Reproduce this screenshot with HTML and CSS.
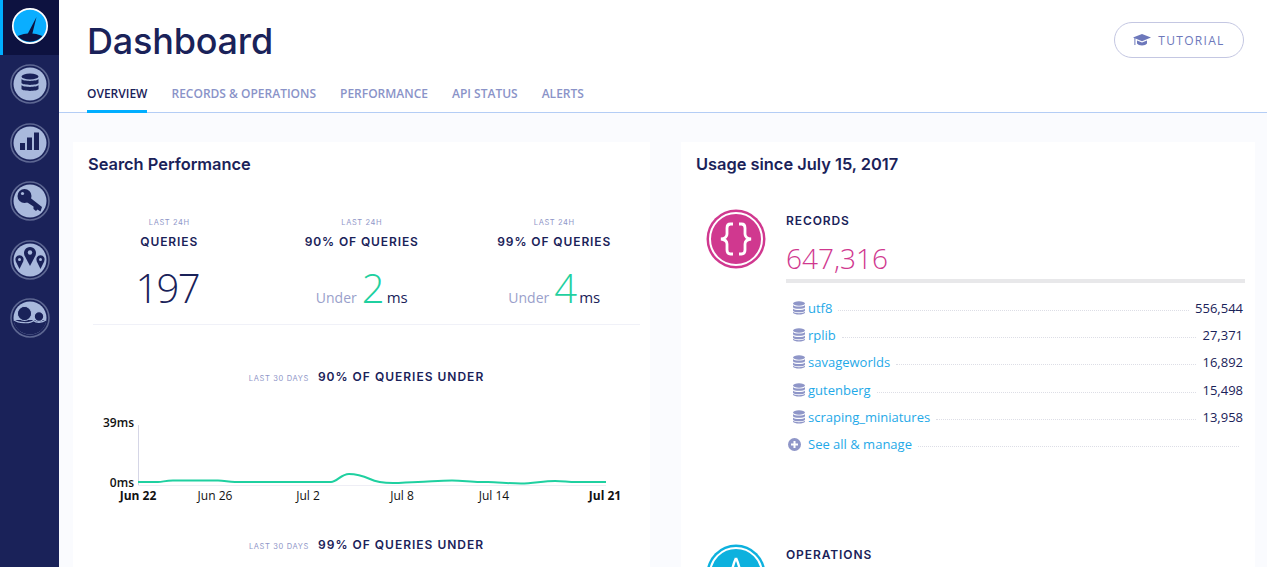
FILE: index.html
```html
<!DOCTYPE html>
<html lang="en">
<head>
    <meta charset="UTF-8">
    <meta name="viewport" content="width=device-width, initial-scale=1.0">
    <title>Dashboard</title>
    <link rel="stylesheet" href="styles.css">
</head>
<body>
    <nav class="sidebar">
        <a class="side-item active">
            <svg viewBox="0 0 40 40" width="40" height="40">
                <circle cx="20" cy="20" r="17" fill="#0aaeff"/>
                <path d="M7.5 30 Q20 24.5 32.5 30 A16.6 16.6 0 0 1 7.5 30 Z" fill="#0d1240"/>
                <circle cx="20" cy="20" r="17.2" fill="none" stroke="#fff" stroke-width="1.7"/>
                <path d="M17.6 28 L26.5 11 L22 29 Q19.5 30 17.6 28 Z" fill="#0d1240"/>
            </svg>
        </a>
        <a class="side-item">
            <svg viewBox="0 0 40 40" width="40" height="40">
                <circle cx="20" cy="20" r="19" fill="none" stroke="#5d6792" stroke-width="1.6"/>
                <circle cx="20" cy="20" r="16.5" fill="#a9b9dc"/>
                <ellipse cx="20" cy="12.5" rx="8.5" ry="3" fill="#1a2259"/>
                <path d="M11.5 15 C13 17.5 27 17.5 28.5 15 V19 C27 21.5 13 21.5 11.5 19 Z" fill="#1a2259"/>
                <path d="M11.5 21 C13 23.5 27 23.5 28.5 21 V25 C27 27.5 13 27.5 11.5 25 Z" fill="#1a2259"/>
            </svg>
        </a>
        <a class="side-item">
            <svg viewBox="0 0 40 40" width="40" height="40">
                <circle cx="20" cy="20" r="19" fill="none" stroke="#5d6792" stroke-width="1.6"/>
                <circle cx="20" cy="20" r="16.5" fill="#a9b9dc"/>
                <rect x="10" y="20" width="5" height="7" fill="#1a2259"/>
                <rect x="17" y="14.5" width="5" height="12.5" fill="#1a2259"/>
                <rect x="24" y="9.5" width="5" height="17.5" fill="#1a2259"/>
            </svg>
        </a>
        <a class="side-item">
            <svg viewBox="0 0 40 40" width="40" height="40">
                <circle cx="20" cy="20" r="19" fill="none" stroke="#5d6792" stroke-width="1.6"/>
                <circle cx="20" cy="20" r="16.5" fill="#a9b9dc"/>
                <circle cx="14.5" cy="15" r="7" fill="#1a2259"/>
                <circle cx="12.5" cy="12.5" r="1.6" fill="#a9b9dc"/>
                <path d="M18 15 L32 26 L30.5 30.5 L27.5 28.5 L26 30 L23.5 28 L23.5 25.5 L15 20 Z" fill="#1a2259"/>
            </svg>
        </a>
        <a class="side-item">
            <svg viewBox="0 0 40 40" width="40" height="40">
                <circle cx="20" cy="20" r="19" fill="none" stroke="#5d6792" stroke-width="1.6"/>
                <circle cx="20" cy="20" r="16.5" fill="#a9b9dc"/>
                <path d="M20 26 L14.5 15.5 A6 6 0 1 1 25.5 15.5 Z" fill="#1a2259"/>
                <circle cx="20" cy="12.5" r="2.2" fill="#a9b9dc"/>
                <path d="M9.5 29 L5.8 21.5 A4.2 4.2 0 1 1 13.2 21.5 Z" fill="#1a2259"/>
                <circle cx="9.5" cy="19.5" r="1.5" fill="#a9b9dc"/>
                <path d="M30.5 29 L26.8 21.5 A4.2 4.2 0 1 1 34.2 21.5 Z" fill="#1a2259"/>
                <circle cx="30.5" cy="19.5" r="1.5" fill="#a9b9dc"/>
            </svg>
        </a>
        <a class="side-item">
            <svg viewBox="0 0 40 40" width="40" height="40">
                <circle cx="20" cy="20" r="19" fill="none" stroke="#5d6792" stroke-width="1.6"/>
                <circle cx="20" cy="20" r="16.5" fill="#a9b9dc"/>
                <path d="M3.6 22 H36.4 C35.5 31 28 36.5 20 36.5 C12 36.5 4.5 31 3.6 22 Z" fill="#1a2259"/>
                <circle cx="14.5" cy="15.5" r="7" fill="#1a2259" stroke="#a9b9dc" stroke-width="1.2"/>
                <circle cx="29" cy="18.5" r="4.8" fill="#1a2259" stroke="#a9b9dc" stroke-width="1.2"/>
                <path d="M4 22 C8 25 20 26 23.5 22.5 C26 25 32 25 36 22" fill="none" stroke="#a9b9dc" stroke-width="1.2"/>
                <circle cx="14.5" cy="15.5" r="6.4" fill="#1a2259"/>
            </svg>
        </a>
    </nav>

    <div class="main">
        <header class="page-header">
            <div class="title-row">
                <h1>Dashboard</h1>
                <a class="tutorial-btn">
                    <svg viewBox="0 0 18 14" width="18" height="14">
                        <path d="M9 1 L18 4.6 L9 8.2 L0 4.6 Z" fill="#6d78bb"/>
                        <path d="M4 7.4 L9 9.4 L14 7.4 V10.6 C12.5 13.2 5.5 13.2 4 10.6 Z" fill="#6d78bb"/>
                        <rect x="1.4" y="5" width="1" height="7" fill="#6d78bb"/>
                    </svg>
                    TUTORIAL
                </a>
            </div>
            <div class="tabs">
                <a class="tab active">OVERVIEW</a>
                <a class="tab">RECORDS &amp; OPERATIONS</a>
                <a class="tab">PERFORMANCE</a>
                <a class="tab">API STATUS</a>
                <a class="tab">ALERTS</a>
            </div>
        </header>

        <div class="content">
            <section class="card">
                <h2>Search Performance</h2>
                <div class="stats">
                    <div class="stat">
                        <div class="stat-period">LAST 24H</div>
                        <div class="stat-title">QUERIES</div>
                        <div class="stat-value"><span class="big-dark">197</span></div>
                    </div>
                    <div class="stat">
                        <div class="stat-period">LAST 24H</div>
                        <div class="stat-title">90% OF QUERIES</div>
                        <div class="stat-value"><span class="under">Under</span><span class="big-green">2</span><span class="unit">ms</span></div>
                    </div>
                    <div class="stat">
                        <div class="stat-period">LAST 24H</div>
                        <div class="stat-title">99% OF QUERIES</div>
                        <div class="stat-value"><span class="under">Under</span><span class="big-green">4</span><span class="unit">ms</span></div>
                    </div>
                </div>
                <div class="stats-rule"></div>

                <div class="chart-head"><span class="chart-period">LAST 30 DAYS</span><span class="chart-title">90% OF QUERIES UNDER</span></div>
                <svg class="chart" viewBox="0 0 577 86" width="577" height="86">
                    <line x1="65.5" y1="10" x2="65.5" y2="70" stroke="#d5d6e6"/>
                    <line x1="65" y1="70.5" x2="533" y2="70.5" stroke="#eeeef5"/>
                    <path d="M65 67 H85 C90 67 92 65.5 100 65.5 H145 C152 65.5 155 67 162 67 H258 C264 67 268 59 276 59 C285 59 290 61 297 64 C303 67 310 68 320 68 C330 68 335 67 345 67 C355 67 365 65.5 379 65.5 C390 65.5 397 67 407 67 H415 C425 67 435 68.5 448 68.5 C460 68.5 470 66 482 66 C490 66 495 67 503 67 H533" fill="none" stroke="#1fd0a0" stroke-width="2"/>
                    <text class="axis-label" x="61" y="12" text-anchor="end" font-weight="600">39ms</text>
                    <text class="axis-label" x="61" y="72" text-anchor="end" font-weight="600">0ms</text>
                    <text class="axis-label" x="65" y="85" text-anchor="middle" font-weight="700">Jun 22</text>
                    <text class="axis-label" x="142" y="85" text-anchor="middle">Jun 26</text>
                    <text class="axis-label" x="235" y="85" text-anchor="middle">Jul 2</text>
                    <text class="axis-label" x="329" y="85" text-anchor="middle">Jul 8</text>
                    <text class="axis-label" x="421" y="85" text-anchor="middle">Jul 14</text>
                    <text class="axis-label" x="532" y="85" text-anchor="middle" font-weight="700">Jul 21</text>
                </svg>
                <div class="chart-head second"><span class="chart-period">LAST 30 DAYS</span><span class="chart-title">99% OF QUERIES UNDER</span></div>
            </section>

            <section class="card">
                <h2>Usage since July 15, 2017</h2>
                <div class="usage">
                    <svg class="usage-icon" viewBox="0 0 60 60" width="60" height="60">
                        <circle cx="30" cy="30" r="29.5" fill="#d0388f"/>
                        <circle cx="30" cy="30" r="26" fill="none" stroke="#fff" stroke-width="2"/>
                        <path d="M27 15 H24.5 C21.5 15 21 17 21 19 V25 C21 27.5 19 29.5 15 30 C19 30.5 21 32.5 21 35 V41 C21 43 21.5 45 24.5 45 H27" fill="none" stroke="#fff" stroke-width="2.8"/>
                        <path d="M33 15 H35.5 C38.5 15 39 17 39 19 V25 C39 27.5 41 29.5 45 30 C41 30.5 39 32.5 39 35 V41 C39 43 38.5 45 35.5 45 H33" fill="none" stroke="#fff" stroke-width="2.8"/>
                    </svg>
                    <div class="usage-body">
                        <div class="usage-title">RECORDS</div>
                        <div class="usage-count">647,316</div>
                        <ul class="index-list">
                            <li><svg class="db-icon" viewBox="0 0 12 14" width="12" height="14"><ellipse cx="6" cy="2.5" rx="6" ry="2.2"/><path d="M0 4 C1 6 11 6 12 4 V6.2 C11 8.2 1 8.2 0 6.2 Z"/><path d="M0 7.6 C1 9.6 11 9.6 12 7.6 V9.8 C11 11.8 1 11.8 0 9.8 Z"/><path d="M0 10.8 C1 12.6 11 12.6 12 10.8 V11.8 C11 14.2 1 14.2 0 11.8 Z"/></svg><a class="index-name">utf8</a><span class="leader"></span><span class="index-count">556,544</span></li>
                            <li><svg class="db-icon" viewBox="0 0 12 14" width="12" height="14"><ellipse cx="6" cy="2.5" rx="6" ry="2.2"/><path d="M0 4 C1 6 11 6 12 4 V6.2 C11 8.2 1 8.2 0 6.2 Z"/><path d="M0 7.6 C1 9.6 11 9.6 12 7.6 V9.8 C11 11.8 1 11.8 0 9.8 Z"/><path d="M0 10.8 C1 12.6 11 12.6 12 10.8 V11.8 C11 14.2 1 14.2 0 11.8 Z"/></svg><a class="index-name">rplib</a><span class="leader"></span><span class="index-count">27,371</span></li>
                            <li><svg class="db-icon" viewBox="0 0 12 14" width="12" height="14"><ellipse cx="6" cy="2.5" rx="6" ry="2.2"/><path d="M0 4 C1 6 11 6 12 4 V6.2 C11 8.2 1 8.2 0 6.2 Z"/><path d="M0 7.6 C1 9.6 11 9.6 12 7.6 V9.8 C11 11.8 1 11.8 0 9.8 Z"/><path d="M0 10.8 C1 12.6 11 12.6 12 10.8 V11.8 C11 14.2 1 14.2 0 11.8 Z"/></svg><a class="index-name">savageworlds</a><span class="leader"></span><span class="index-count">16,892</span></li>
                            <li><svg class="db-icon" viewBox="0 0 12 14" width="12" height="14"><ellipse cx="6" cy="2.5" rx="6" ry="2.2"/><path d="M0 4 C1 6 11 6 12 4 V6.2 C11 8.2 1 8.2 0 6.2 Z"/><path d="M0 7.6 C1 9.6 11 9.6 12 7.6 V9.8 C11 11.8 1 11.8 0 9.8 Z"/><path d="M0 10.8 C1 12.6 11 12.6 12 10.8 V11.8 C11 14.2 1 14.2 0 11.8 Z"/></svg><a class="index-name">gutenberg</a><span class="leader"></span><span class="index-count">15,498</span></li>
                            <li><svg class="db-icon" viewBox="0 0 12 14" width="12" height="14"><ellipse cx="6" cy="2.5" rx="6" ry="2.2"/><path d="M0 4 C1 6 11 6 12 4 V6.2 C11 8.2 1 8.2 0 6.2 Z"/><path d="M0 7.6 C1 9.6 11 9.6 12 7.6 V9.8 C11 11.8 1 11.8 0 9.8 Z"/><path d="M0 10.8 C1 12.6 11 12.6 12 10.8 V11.8 C11 14.2 1 14.2 0 11.8 Z"/></svg><a class="index-name">scraping_miniatures</a><span class="leader"></span><span class="index-count">13,958</span></li>
                            <li class="see-all"><svg class="plus-icon" viewBox="0 0 13 13" width="13" height="13"><circle cx="6.5" cy="6.5" r="6.5" fill="#8f96c8"/><path d="M3 6.5 H10 M6.5 3 V10" stroke="#fff" stroke-width="2"/></svg><a class="index-name">See all &amp; manage</a><span class="leader"></span></li>
                        </ul>
                    </div>
                </div>
                <div class="usage operations">
                    <svg class="usage-icon" viewBox="0 0 60 60" width="60" height="60">
                        <circle cx="30" cy="30" r="29.5" fill="#0db1de"/>
                        <circle cx="30" cy="30" r="26" fill="none" stroke="#fff" stroke-width="2"/>
                        <path d="M30 14 C26 22 24 34 22 46 M30 14 C34 22 36 34 38 46" fill="none" stroke="#fff" stroke-width="2.4"/>
                    </svg>
                    <div class="usage-body">
                        <div class="usage-title">OPERATIONS</div>
                    </div>
                </div>
            </section>
        </div>
    </div>
</body>
</html>
```

FILE: styles.css
```css
* {
    box-sizing: border-box;
}

html, body {
    height: 100%;
}

body {
    margin: 0;
    display: flex;
    overflow: hidden;
    background: #fff;
    color: #1a2259;
    font-family: "Open Sans", Arial, sans-serif;
}

/* left icon rail */
.sidebar {
    width: 59px;
    flex-shrink: 0;
    background: #1a2259;
    display: flex;
    flex-direction: column;
}

.side-item {
    height: 58.5px;
    display: flex;
    align-items: center;
    justify-content: center;
}

.side-item.active {
    height: 55px;
    background: #0d1240;
    border-left: 3px solid #00aeff;
    padding: 0 3px 3px 0;
}

.main {
    flex: 1;
    min-width: 0;
    height: 100%;
    overflow: hidden;
    display: flex;
    flex-direction: column;
    background: #fafbfe;
}

.page-header {
    height: 113px;
    padding: 0 23px 0 28px;
    background: #fff;
    border-bottom: 1px solid #b4cdf5;
    display: flex;
    flex-direction: column;
    flex-shrink: 0;
}

.title-row {
    display: flex;
    justify-content: space-between;
    align-items: flex-start;
    height: 79px;
}

h1 {
    margin: 19px 0 0;
    font-family: "Inter", "Lato", sans-serif;
    font-size: 36px;
    line-height: 44px;
    font-weight: 500;
    letter-spacing: -0.2px;
}

.tutorial-btn {
    margin-top: 22px;
    width: 130px;
    height: 36px;
    border: 1px solid #c4c7e2;
    border-radius: 18px;
    display: flex;
    align-items: center;
    justify-content: center;
    gap: 7px;
    color: #6d78bb;
    font-size: 12px;
    letter-spacing: 1.3px;
}

.tabs {
    display: flex;
    gap: 24px;
    height: 33px;
}

.tab {
    height: 34px;
    padding-top: 6px;
    font-size: 12px;
    line-height: 17px;
    font-weight: 600;
    color: #8a93c8;
}

.tab.active {
    color: #1a2259;
    border-bottom: 3px solid #00aeff;
}

.content {
    flex: 1;
    min-height: 0;
    overflow: hidden;
    display: grid;
    grid-template-columns: 577px 574px;
    gap: 31px;
    padding: 29px 0 0 14px;
}

.card {
    background: #fff;
    overflow: hidden;
}

h2 {
    margin: 11px 0 0 15px;
    font-family: "Inter", "Lato", sans-serif;
    font-size: 16.4px;
    line-height: 22px;
    font-weight: 600;
}

.stats {
    display: grid;
    grid-template-columns: repeat(3, 192.5px);
    height: 149px;
    padding-top: 42px;
}

.stats-rule {
    height: 1px;
    margin: 0 10px 0 20px;
    background: #f0f1f8;
}

.stat {
    text-align: center;
}

.stat-period {
    font-family: "Inter", sans-serif;
    font-size: 7.5px;
    line-height: 12px;
    letter-spacing: 0.6px;
    color: #8f96c8;
}

.stat-title {
    margin-top: 6px;
    font-family: "Inter", sans-serif;
    font-size: 12px;
    line-height: 14px;
    font-weight: 600;
    letter-spacing: 0.9px;
}

.stat-value {
    margin-top: 14px;
    height: 50px;
    display: flex;
    align-items: baseline;
    justify-content: center;
    font-weight: 300;
}

.big-dark {
    font-size: 40px;
    line-height: 50px;
    letter-spacing: -1.6px;
    padding-right: 4px;
}

.big-green {
    font-size: 40px;
    line-height: 50px;
    color: #1fd0a0;
    margin: 0 2px 0 5px;
}

.under {
    font-size: 14px;
    color: #9a9fcb;
    font-weight: 400;
}

.unit {
    font-size: 15px;
    font-weight: 400;
}

.chart-head {
    margin-top: 44px;
    display: flex;
    justify-content: center;
    align-items: baseline;
    gap: 9px;
    line-height: 16px;
    padding-left: 10px;
}

.chart-head.second {
    margin-top: 36px;
}

.chart-period {
    font-family: "Inter", sans-serif;
    font-size: 7.5px;
    letter-spacing: 0.65px;
    color: #8f96c8;
}

.chart-title {
    font-family: "Inter", sans-serif;
    font-size: 12px;
    font-weight: 600;
    letter-spacing: 1px;
}

.chart {
    display: block;
    margin-top: 28px;
    overflow: visible;
}

.axis-label {
    font-family: "Open Sans", sans-serif;
    font-size: 12px;
    fill: #111;
}

.usage {
    display: flex;
    gap: 20px;
    padding-left: 25px;
    margin-top: 38px;
}

.usage-icon {
    flex-shrink: 0;
    margin-top: -4px;
}

.usage-body {
    flex: 1;
    padding-right: 10px;
}

.usage-title {
    font-family: "Inter", sans-serif;
    font-size: 12px;
    line-height: 16px;
    font-weight: 600;
    letter-spacing: 0.9px;
}

.usage-count {
    margin-top: 9px;
    height: 35px;
    font-size: 28px;
    line-height: 40px;
    font-weight: 300;
    color: #d0388f;
}

.index-list {
    list-style: none;
    margin: 6px 0 0;
    padding: 11px 0 0 7px;
    border-top: 4px solid #e8e8ea;
}

.index-list li {
    height: 27.3px;
    display: flex;
    align-items: center;
    font-size: 13px;
}

.db-icon {
    fill: #8f96c8;
    flex-shrink: 0;
    margin-right: 3px;
}

.plus-icon {
    flex-shrink: 0;
    margin: 0 7px 0 -5px;
}

.index-name {
    color: #1fa9e8;
}

.leader {
    flex: 1;
    margin: 5px 6px 0;
    border-bottom: 1px dotted #dddee6;
}

.index-count {
    color: #1a2259;
    padding-right: 2px;
}

.operations {
    margin-top: 89px;
}

.operations .usage-icon {
    margin-top: -3px;
}
```
